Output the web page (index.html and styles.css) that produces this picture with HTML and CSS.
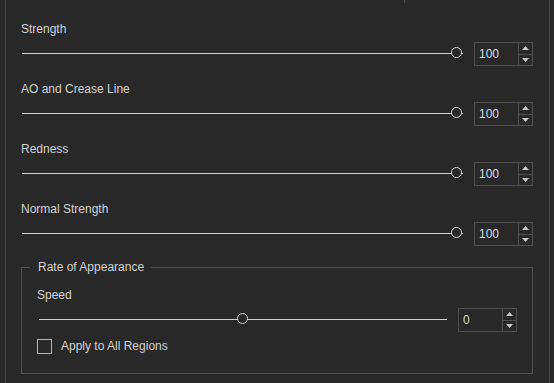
FILE: index.html
```html
<!DOCTYPE html>
<html lang="en">
<head>
    <meta charset="UTF-8">
    <title>Skin Settings</title>
    <link rel="stylesheet" href="styles.css">
</head>
<body>
    <div class="panel">
        <div class="edge"><span class="tick"></span></div>
        <div class="rows">
            <div class="row">
                <div class="label">Strength</div>
                <div class="control">
                    <div class="slider"><div class="track"></div><div class="thumb" style="left: calc(100% - 12px);"></div></div>
                    <div class="spin">
                        <div class="value">100</div>
                        <div class="arrows">
                            <div class="arrow"><svg width="7" height="4" viewBox="0 0 7 4"><polygon points="3.5,0 7,4 0,4"/></svg></div>
                            <div class="arrow"><svg width="7" height="4" viewBox="0 0 7 4"><polygon points="0,0 7,0 3.5,4"/></svg></div>
                        </div>
                    </div>
                </div>
            </div>
            <div class="row">
                <div class="label">AO and Crease Line</div>
                <div class="control">
                    <div class="slider"><div class="track"></div><div class="thumb" style="left: calc(100% - 12px);"></div></div>
                    <div class="spin">
                        <div class="value">100</div>
                        <div class="arrows">
                            <div class="arrow"><svg width="7" height="4" viewBox="0 0 7 4"><polygon points="3.5,0 7,4 0,4"/></svg></div>
                            <div class="arrow"><svg width="7" height="4" viewBox="0 0 7 4"><polygon points="0,0 7,0 3.5,4"/></svg></div>
                        </div>
                    </div>
                </div>
            </div>
            <div class="row">
                <div class="label">Redness</div>
                <div class="control">
                    <div class="slider"><div class="track"></div><div class="thumb" style="left: calc(100% - 12px);"></div></div>
                    <div class="spin">
                        <div class="value">100</div>
                        <div class="arrows">
                            <div class="arrow"><svg width="7" height="4" viewBox="0 0 7 4"><polygon points="3.5,0 7,4 0,4"/></svg></div>
                            <div class="arrow"><svg width="7" height="4" viewBox="0 0 7 4"><polygon points="0,0 7,0 3.5,4"/></svg></div>
                        </div>
                    </div>
                </div>
            </div>
            <div class="row">
                <div class="label">Normal Strength</div>
                <div class="control">
                    <div class="slider"><div class="track"></div><div class="thumb" style="left: calc(100% - 12px);"></div></div>
                    <div class="spin">
                        <div class="value">100</div>
                        <div class="arrows">
                            <div class="arrow"><svg width="7" height="4" viewBox="0 0 7 4"><polygon points="3.5,0 7,4 0,4"/></svg></div>
                            <div class="arrow"><svg width="7" height="4" viewBox="0 0 7 4"><polygon points="0,0 7,0 3.5,4"/></svg></div>
                        </div>
                    </div>
                </div>
            </div>

            <!-- Rate of Appearance group -->
            <fieldset class="group">
                <legend>Rate of Appearance</legend>
                <div class="group-body">
                    <div class="label">Speed</div>
                    <div class="control">
                        <div class="slider speed"><div class="track"></div><div class="thumb" style="left: calc(50% - 6px);"></div></div>
                        <div class="spin">
                            <div class="value">0</div>
                            <div class="arrows">
                                <div class="arrow"><svg width="7" height="4" viewBox="0 0 7 4"><polygon points="3.5,0 7,4 0,4"/></svg></div>
                                <div class="arrow"><svg width="7" height="4" viewBox="0 0 7 4"><polygon points="0,0 7,0 3.5,4"/></svg></div>
                            </div>
                        </div>
                    </div>
                    <label class="check"><span class="box"></span>Apply to All Regions</label>
                </div>
            </fieldset>
        </div>
    </div>
</body>
</html>
```

FILE: styles.css
```css
html, body { margin: 0; padding: 0; }
body { background: #282828; color: #d2d2d2; font-family: "Liberation Sans", Arial, sans-serif; font-size: 12px; line-height: 14px; width: 554px; height: 383px; overflow: hidden; }
.panel { margin-left: 5px; width: 543px; height: 383px; border-left: 1px solid #444; border-right: 1px solid #444; }
.edge { height: 3px; }
.tick { display: block; margin-left: 398px; width: 1px; height: 3px; background: #4a4a4a; }
.rows { padding: 19px 16px 0 15px; }
.row + .row { margin-top: 16px; }
.label { height: 14px; margin-bottom: 6px; }
.control { display: flex; align-items: center; height: 24px; gap: 11px; }
.slider { position: relative; flex: 1; height: 24px; margin-left: 1px; }
.slider.speed { margin-left: 2px; }
.track { position: absolute; left: 0; right: 0; top: 11px; height: 1px; background: #d0d0d0; }
.thumb { position: absolute; top: 5px; width: 9px; height: 9px; border: 1.5px solid #d8d8d8; border-radius: 50%; background: #282828; }
.spin { display: flex; width: 57px; height: 22px; border: 1px solid #4e4e4e; }
.value { flex: 1; padding-left: 4px; line-height: 22px; color: #d4dae4; }
.arrows { display: flex; flex-direction: column; width: 13px; border-left: 1px solid #4e4e4e; }
.arrow { flex: 1; display: flex; align-items: center; justify-content: center; }
.arrow + .arrow { border-top: 1px solid #4e4e4e; }
.arrow svg { fill: #c8c8c8; }
.group { margin: 14px 0 0 0; padding: 0 15px 20px 0; border: 1px solid #505050; min-width: 0; }
.group legend { margin-left: 8px; padding: 0 7px 0 8px; line-height: 14px; }
.group-body { padding: 14px 0 0 15px; }
.check { display: flex; align-items: center; gap: 9px; margin-top: 7px; height: 14px; }
.box { width: 13px; height: 13px; border: 1px solid #b4b4b4; }
```
